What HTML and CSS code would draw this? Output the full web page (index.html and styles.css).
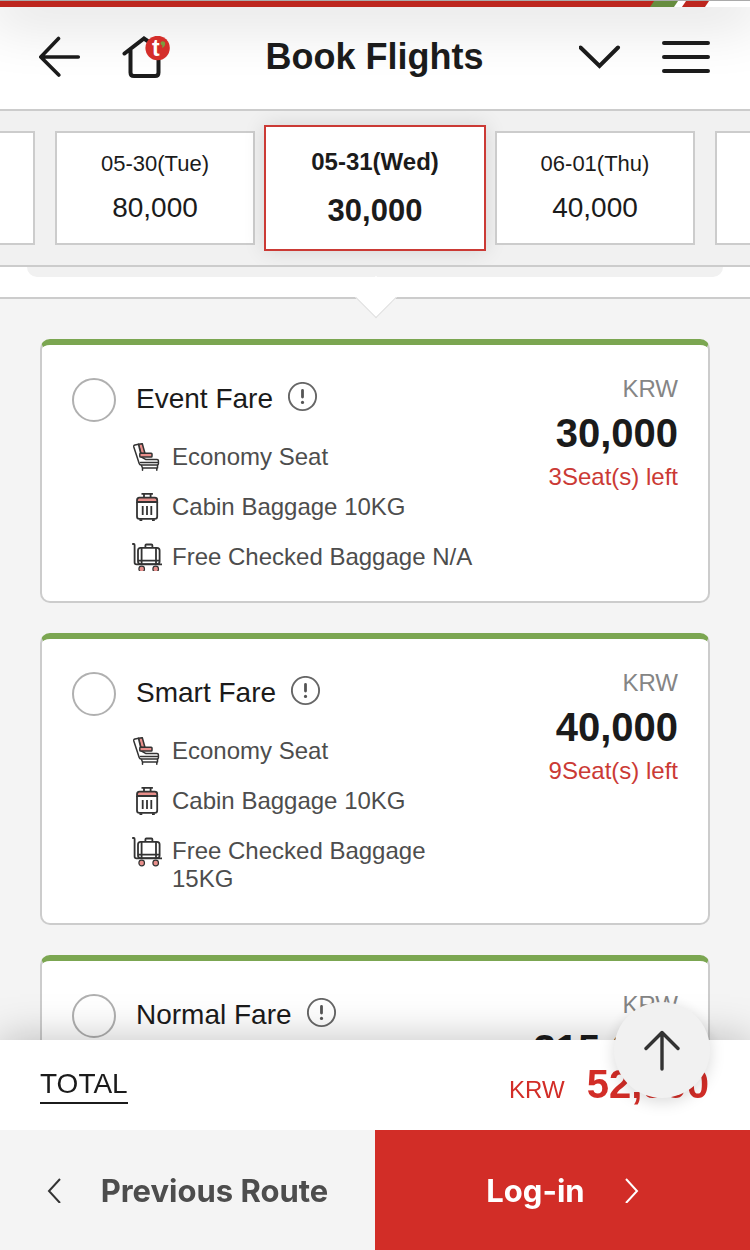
FILE: index.html
```html
<!DOCTYPE html>
<html lang="en">
  <head>
    <meta charset="utf-8">
    <meta name="viewport" content="width=device-width, initial-scale=1">
    <title>Book Flights</title>
    <link rel="stylesheet" href="styles.css">
  </head>
  <body>
    <!-- shared icons -->
    <svg class="sprite" aria-hidden="true">
      <symbol id="icon-info" viewBox="0 0 30 30">
        <circle cx="14.500" cy="14.500" r="13.600" fill="none" stroke="#666" stroke-width="1.900"/>
        <path d="M14.500 8.500v6.500" fill="none" stroke="#555" stroke-width="2.800" stroke-linecap="round"/>
        <circle cx="14.500" cy="20.400" r="1.600" fill="#555"/>
      </symbol>
      <symbol id="icon-seat" viewBox="0 0 30 28">
        <g stroke="#333" stroke-width="1.500" stroke-linejoin="round" stroke-linecap="round">
          <path d="M6.500 1.300l3.800-.6L13 10.500H9z" fill="#e88f8b"/>
          <path d="M6.500 1.300L3 2c-1 .2-1.500.9-1.200 1.900L7.200 20.500c.3 1 .9 1.500 1.900 1.500h16c.8 0 1.300-.4 1.300-1.200v-3c0-.8-.5-1.200-1.300-1.200H14L9.500 14z" fill="#fff"/>
          <rect x="7.800" y="10.300" width="12.200" height="3.800" rx=".8" fill="#e88f8b"/>
          <path d="M9.500 22.500l1 2.500h15v-2.500M10.500 25v2.200M24.800 25v2.200M8.500 19.500h17" fill="none"/>
        </g>
      </symbol>
      <symbol id="icon-cabin" viewBox="0 0 30 28">
        <g fill="none" stroke="#333" stroke-width="1.800">
          <path d="M9.500.900h11.400M12 .900V5M18.600.900V5"/>
          <path d="M5 9V7.400Q5 4.600 7.400 4.600h15.400q2.400 0 2.400 2.400V9z" fill="#e88f8b"/>
          <path d="M5 9v14.500q0 2.400 2.400 2.400h15.400q2.400 0 2.400-2.400V9"/>
          <path d="M10.700 13v9M15 13v9M19.300 13v9M7.500 27.200h2.800M20 27.200h2.800"/>
        </g>
      </symbol>
      <symbol id="icon-checked" viewBox="0 0 30 30">
        <g fill="none" stroke="#333" stroke-width="1.800">
          <path d="M.2 1h1.600q.8 0 .8 1v17.500q0 1.900 1.900 1.900H30"/>
          <path d="M13.400 4.800V2.500q0-1 1-1h5q1 0 1 1v2.300"/>
          <rect x="6" y="4.800" width="21.600" height="16.400" rx="2.600"/>
          <path d="M9.600 4.800v16.400M24 4.800v16.400M6 17.600h21.600"/>
        </g>
        <g fill="#e88f8b" stroke="#333" stroke-width="1.200">
          <circle cx="9.700" cy="26" r="2.800"/>
          <circle cx="23.700" cy="26" r="2.800"/>
        </g>
      </symbol>
    </svg>

    <div class="app">
      <header class="header">
        <div class="stripe"><span class="stripe_main"></span><span class="stripe_green"></span><span class="stripe_red"></span></div>
        <div class="nav">
          <div class="nav_left">
            <button type="button" class="icon_btn" aria-label="Back">
              <svg width="42" height="42" viewBox="0 0 42 42" fill="none" stroke="#1b1b1b" stroke-width="3.600" stroke-linecap="round" stroke-linejoin="round">
                <path d="M19.500 2.500L1.800 21l18 18M1.800 21h37.500"/>
              </svg>
            </button>
            <a href="#" class="icon_btn" aria-label="Home">
              <svg width="48" height="42" viewBox="0 0 48 42">
                <path d="M2.500 17.500L22 2.500l8 5.500M8.500 14v22.500q0 3.500 3.500 3.500h21q3.500 0 3.500-3.500V20" fill="none" stroke="#1b1b1b" stroke-width="4" stroke-linecap="round" stroke-linejoin="miter"/>
                <circle cx="35.600" cy="12" r="12.200" fill="#d42e2a"/>
                <text x="30" y="19.500" class="logo_t">t</text>
                <path d="M40.500 5.200c2.300 0 3.200 1.700 2.500 3.700-.6 1.600-1.600 2.500-3 2.800l.5-2.300c-2.600-.8-2.400-4 0-4.200z" fill="#7c9a3e"/>
              </svg>
            </a>
          </div>
          <h1>Book Flights</h1>
          <div class="nav_right">
            <button type="button" class="icon_btn" aria-label="Show itinerary">
              <svg width="42" height="42" viewBox="0 0 42 42" fill="none" stroke="#1b1b1b" stroke-width="4" stroke-linecap="round" stroke-linejoin="miter">
                <path d="M1.500 11.500l19 18.500 18.500-18.500"/>
              </svg>
            </button>
            <button type="button" class="icon_btn" aria-label="Menu">
              <svg width="48" height="42" viewBox="0 0 48 42" fill="none" stroke="#1b1b1b" stroke-width="4" stroke-linecap="round">
                <path d="M2 7h44M2 21h44M2 35h44"/>
              </svg>
            </button>
          </div>
        </div>
      </header>

      <nav class="dates" aria-label="Departure date">
        <button type="button" class="date" aria-label="Earlier date"></button>
        <button type="button" class="date"><span class="date_day">05-30(Tue)</span><span class="date_price">80,000</span></button>
        <button type="button" class="date selected"><span class="date_day">05-31(Wed)</span><span class="date_price">30,000</span></button>
        <button type="button" class="date"><span class="date_day">06-01(Thu)</span><span class="date_price">40,000</span></button>
        <button type="button" class="date" aria-label="Later date"></button>
      </nav>

      <main>
        <div class="flight"></div>
        <section class="fares">
          <article class="fare">
            <input type="radio" name="fare" id="fare_event">
            <div class="fare_info">
              <div class="fare_title">
                <label for="fare_event">Event Fare</label>
                <button type="button" class="icon_btn" aria-label="About Event Fare"><svg width="30" height="30"><use href="#icon-info"/></svg></button>
              </div>
              <ul>
                <li><svg width="30" height="28"><use href="#icon-seat"/></svg>Economy Seat</li>
                <li><svg width="30" height="28"><use href="#icon-cabin"/></svg>Cabin Baggage 10KG</li>
                <li><svg width="30" height="28" viewBox="0 0 30 28"><use href="#icon-checked" width="30" height="30"/></svg>Free Checked Baggage N/A</li>
              </ul>
            </div>
            <div class="fare_price">
              <span class="currency">KRW</span>
              <strong>30,000</strong>
              <span class="seats">3Seat(s) left</span>
            </div>
          </article>

          <article class="fare">
            <input type="radio" name="fare" id="fare_smart">
            <div class="fare_info">
              <div class="fare_title">
                <label for="fare_smart">Smart Fare</label>
                <button type="button" class="icon_btn" aria-label="About Smart Fare"><svg width="30" height="30"><use href="#icon-info"/></svg></button>
              </div>
              <ul>
                <li><svg width="30" height="28"><use href="#icon-seat"/></svg>Economy Seat</li>
                <li><svg width="30" height="28"><use href="#icon-cabin"/></svg>Cabin Baggage 10KG</li>
                <li><svg width="30" height="30"><use href="#icon-checked"/></svg>Free Checked Baggage 15KG</li>
              </ul>
            </div>
            <div class="fare_price">
              <span class="currency">KRW</span>
              <strong>40,000</strong>
              <span class="seats">9Seat(s) left</span>
            </div>
          </article>

          <article class="fare">
            <input type="radio" name="fare" id="fare_normal">
            <div class="fare_info">
              <div class="fare_title">
                <label for="fare_normal">Normal Fare</label>
                <button type="button" class="icon_btn" aria-label="About Normal Fare"><svg width="30" height="30"><use href="#icon-info"/></svg></button>
              </div>
            </div>
            <div class="fare_price">
              <span class="currency">KRW</span>
              <strong>315,000</strong>
            </div>
          </article>
        </section>
      </main>

      <footer class="footer">
        <div class="total">
          <a href="#">TOTAL</a>
          <p><span>KRW</span><strong>52,900</strong></p>
        </div>
        <div class="actions">
          <button type="button" class="prev">
            <svg width="14" height="26" viewBox="0 0 14 26" fill="none" stroke="#333" stroke-width="2"><path d="M13 2L2 14l11 12"/></svg>
            Previous Route
          </button>
          <button type="button" class="login">
            Log-in
            <svg width="14" height="26" viewBox="0 0 14 26" fill="none" stroke="#fff" stroke-width="2"><path d="M1 2l11 12L1 26"/></svg>
          </button>
        </div>
        <button type="button" class="to_top" aria-label="Back to top">
          <svg width="36" height="42" viewBox="0 0 36 42" fill="none" stroke="#333" stroke-width="3.400" stroke-linecap="round" stroke-linejoin="round"><path d="M2 19.500L18 3.500l16 16M18 3.500V40"/></svg>
        </button>
      </footer>
    </div>
  </body>
</html>
```
FILE: styles.css
```css
:root {
  --red: #d22d27;
  --green: #7ba651;
  --line: #ccc;
  --grey: #f4f4f4;
  --text: #1b1b1b;
}

* {
  box-sizing: border-box;
}

body {
  margin: 0;
  font-family: "Liberation Sans", Arial, sans-serif;
  color: var(--text);
  background: #fff;
}

h1, p, ul {
  margin: 0;
  padding: 0;
}

button {
  font: inherit;
  color: inherit;
  border: 0;
  padding: 0;
  background: none;
}

svg {
  display: block;
  flex: none;
}

.sprite {
  position: absolute;
  width: 0;
  height: 0;
}

.icon_btn {
  display: block;
}

.app {
  height: 100vh;
  display: flex;
  flex-direction: column;
}

/* HEADER */
.header {
  border-bottom: 2px solid var(--line);
  overflow: hidden;
}

.stripe {
  display: flex;
  height: 7px;
  padding-right: 43px;
  border-top: 1px solid #aaa;
  box-shadow: 0 0 60px 10px rgba(0, 0, 0, 0.2);
}

.stripe_main {
  flex: 1;
  margin-right: -2px;
  background: #bd261e;
}

.stripe_green {
  width: 24px;
  background: #678d3f;
  transform: skewX(-34deg);
}

.stripe_red {
  width: 23px;
  margin-left: 8px;
  background: #bd261e;
  transform: skewX(-34deg);
}

.nav {
  height: 102px;
  padding: 0 40px 2px 39px;
  display: grid;
  grid-template-columns: 1fr auto 1fr;
  align-items: center;
}

.nav_left,
.nav_right {
  display: flex;
  gap: 41px;
}

.nav_right {
  justify-content: flex-end;
}

h1 {
  font-size: 36px;
  line-height: 42px;
}

.logo_t {
  font-size: 23px;
  font-weight: bold;
  fill: #fff;
}

/* DATES */
.dates {
  display: flex;
  flex: none;
  align-items: center;
  justify-content: center;
  gap: 20px;
  height: 156px;
  background: #f1f1f1;
  border-bottom: 2px solid var(--line);
  overflow: hidden;
}

.date {
  flex: none;
  width: 200px;
  height: 114px;
  border: 2px solid var(--line);
  background: #fff;
  display: flex;
  flex-direction: column;
  align-items: center;
  justify-content: center;
  gap: 12px;
}

.date_day {
  font-size: 22px;
  line-height: 28px;
}

.date_price {
  font-size: 28px;
  line-height: 36px;
}

.selected {
  width: 222px;
  height: 126px;
  margin: 0 -11px;
  gap: 17px;
  border-color: #cb3a35;
  font-weight: bold;
  box-shadow: 0 0 20px rgba(0, 0, 0, 0.12);
}

.selected .date_day {
  font-size: 24px;
}

.selected .date_price {
  font-size: 31px;
}

/* FARES */
main {
  flex: 1;
  min-height: 0;
  overflow-y: auto;
  scrollbar-width: none;
  background: var(--grey);
}

.flight {
  height: 30px;
  padding: 0 27px;
  background: #fff;
}

.flight::before {
  content: "";
  display: block;
  height: 10px;
  border-radius: 0 0 10px 10px;
  background: #f1f1f1;
}

.fares {
  position: relative;
  display: flex;
  flex-direction: column;
  gap: 30px;
  padding: 40px;
  border-top: 2px solid var(--line);
}

/* pointer under the selected flight */
.fares::before {
  content: "";
  position: absolute;
  top: -16px;
  left: 50%;
  width: 28px;
  height: 28px;
  margin-left: -14px;
  margin-top: -1px;
  background: #fff;
  border: 1px solid #ddd;
  border-color: transparent #ddd #ddd transparent;
  transform: rotate(45deg);
}

.fare {
  display: flex;
  gap: 16px;
  padding: 30px;
  background: #fff;
  border: 2px solid var(--line);
  border-top: 6px solid var(--green);
  border-radius: 10px;
}

.fare input {
  appearance: none;
  flex: none;
  width: 44px;
  height: 44px;
  margin: 3px 0 0;
  border: 2px solid #b0b0b0;
  border-radius: 50%;
  background: #fff;
}

.fare input:checked {
  border: 12px solid var(--red);
}

.fare_info {
  flex: 1;
}

.fare_title {
  display: flex;
  align-items: center;
  gap: 15px;
  padding: 2px 0 0 4px;
  font-size: 28px;
  line-height: 40px;
}

.fare_title label {
  padding-top: 3px;
  line-height: 37px;
}

.fare ul {
  list-style: none;
  display: flex;
  flex-direction: column;
  gap: 22px;
  margin-top: 26px;
}

.fare li {
  display: flex;
  gap: 10px;
  font-size: 24px;
  line-height: 28px;
  color: #4d4d4d;
}

.fare li svg {
  margin-bottom: -2px;
}

.fare_price {
  flex: none;
  width: 180px;
  display: flex;
  flex-direction: column;
  align-items: flex-end;
  font-size: 24px;
  line-height: 28px;
}

.fare_price strong {
  font-size: 40px;
  line-height: 60px;
}

.currency {
  color: #858585;
}

.seats {
  color: #cb3a35;
}

/* FOOTER */
.footer {
  position: relative;
  z-index: 1;
  background: #fff;
  box-shadow: 0 0 40px rgba(0, 0, 0, 0.25);
}

.total {
  display: flex;
  align-items: center;
  justify-content: space-between;
  height: 90px;
  padding: 0 40px;
}

.total a {
  font-size: 28px;
  line-height: 36px;
  color: inherit;
  text-decoration: none;
  border-bottom: 2px solid var(--text);
}

.total p {
  padding: 0 1px 2px 0;
  color: var(--red);
}

.total span {
  font-size: 24px;
}

.total strong {
  margin-left: 22px;
  font-size: 40px;
}

.actions {
  display: grid;
  grid-template-columns: 1fr 1fr;
}

.actions button {
  display: flex;
  align-items: center;
  justify-content: center;
  gap: 40px;
  height: 120px;
  font-family: Inter, sans-serif;
  font-size: 31px;
  font-weight: 700;
  font-optical-sizing: none;
}

.prev {
  background: var(--grey);
  color: #4d4d4d;
}

.actions .login {
  background: var(--red);
  color: #fff;
}

.to_top {
  position: absolute;
  top: -38px;
  right: 40px;
  width: 96px;
  height: 96px;
  border-radius: 50%;
  background: #f1f1f1;
  box-shadow: 0 4px 16px rgba(0, 0, 0, 0.15);
  display: flex;
  align-items: center;
  justify-content: center;
}
```
